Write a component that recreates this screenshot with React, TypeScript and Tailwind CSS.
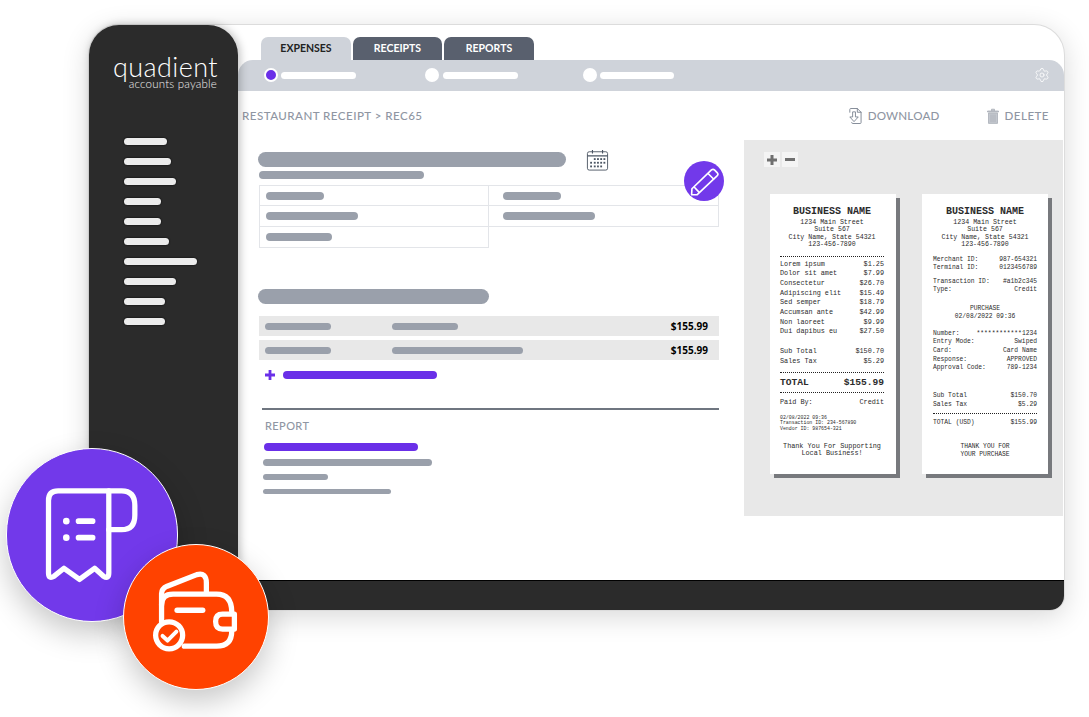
import React from 'react';
import { Settings } from 'lucide-react';

const menuWidths = ['w-[43px]', 'w-[47px]', 'w-[52px]', 'w-[37px]', 'w-[37px]', 'w-[45px]', 'w-[73px]', 'w-[52px]', 'w-[41px]', 'w-[41px]'];

const Bar: React.FC<{ className: string }> = ({ className }) => <div className={`rounded-full ${className}`} />;

const Row: React.FC<{ left: string; right: string; className?: string }> = ({ left, right, className = 'h-[9.7px] leading-[9.7px]' }) => (
  <div className={`flex justify-between whitespace-pre ${className}`}>
    <span>{left}</span>
    <span>{right}</span>
  </div>
);

const Dots: React.FC<{ className?: string }> = ({ className = '' }) => <div className={`border-t border-dotted border-[#222] ${className}`} />;

const ReceiptHead = () => (
  <div className="text-center">
    <div className="text-[10px] leading-[12px] font-bold">BUSINESS NAME</div>
    <div className="mt-[1px] text-[6.6px] leading-[7.4px]">
      <div>1234 Main Street</div>
      <div>Suite 567</div>
      <div>City Name, State 54321</div>
      <div>123-456-7890</div>
    </div>
  </div>
);

const Paper: React.FC<{ className: string; children: React.ReactNode }> = ({ className, children }) => (
  <div className={`relative h-[280px] w-[126px] bg-white pt-[12px] font-['Liberation_Mono',monospace] text-[6.8px] text-[#2b2b2b] shadow-[4px_4px_0_#77797d] ${className}`}>
    {children}
  </div>
);

const ReceiptA = () => (
  <Paper className="pl-[10px] pr-[12px]">
    <ReceiptHead />
    <Dots className="mt-[7px]" />
    <div className="mt-[3px]">
      <Row left="Lorem ipsum" right="$1.25" />
      <Row left="Dolor sit amet" right="$7.99" />
      <Row left="Consectetur" right="$26.70" />
      <Row left="Adipiscing elit" right="$15.49" />
      <Row left="Sed semper" right="$18.79" />
      <Row left="Accumsan ante" right="$42.99" />
      <Row left="Non laoreet" right="$9.99" />
      <Row left="Dui dapibus eu" right="$27.50" />
    </div>
    <div className="mt-[10px]">
      <Row left="Sub Total" right="$150.70" />
      <Row left="Sales Tax" right="$5.29" />
    </div>
    <Dots className="mt-[5px]" />
    <Row left="TOTAL" right="$155.99" className="mt-[3px] h-[14px] text-[9.6px] font-bold leading-[14px]" />
    <Dots className="mt-[2px]" />
    <Row left="Paid By:" right="Credit" className="mt-[4px] h-[10px] leading-[10px]" />
    <div className="mt-[8px] text-[4.9px] leading-[5.6px]">
      <div>02/08/2022 09:36</div>
      <div>Transaction ID: 234-567890</div>
      <div>Vendor ID: 987654-321</div>
    </div>
    <div className="mt-[12px] text-center leading-[7.2px]">
      <div>Thank You For Supporting</div>
      <div>Local Business!</div>
    </div>
  </Paper>
);

const ReceiptB = () => (
  <Paper className="px-[11px]">
    <ReceiptHead />
    <div className="mt-[7px] text-[6.3px] leading-[8px]">
      <Row left="Merchant ID:" right="987-654321" className="" />
      <Row left="Terminal ID:" right="0123456789" className="" />
      <Row left="Transaction ID:" right="#a1b2c345" className="mt-[6px]" />
      <Row left="Type:" right="Credit" className="" />
      <div className="mt-[11px] text-center">
        <div>PURCHASE</div>
        <div>02/08/2022 09:36</div>
      </div>
      <div className="mt-[9px] leading-[8.7px]">
        <Row left="Number:" right="************1234" className="" />
        <Row left="Entry Mode:" right="Swiped" className="" />
        <Row left="Card:" right="Card Name" className="" />
        <Row left="Response:" right="APPROVED" className="" />
        <Row left="Approval Code:" right="789-1234" className="" />
      </div>
      <div className="mt-[18px] leading-[9px]">
        <Row left="Sub Total" right="$150.70" className="" />
        <Row left="Sales Tax" right="$5.29" className="" />
      </div>
      <Dots className="mt-[4px]" />
      <Row left="TOTAL (USD)" right="$155.99" className="mt-[5px]" />
      <div className="mt-[16px] text-center leading-[7.4px]">
        <div>THANK YOU FOR</div>
        <div>YOUR PURCHASE</div>
      </div>
    </div>
  </Paper>
);

const PurpleBadge = () => (
  <div className="absolute left-[6px] top-[448px] z-20 h-[174px] w-[172px] rounded-full border border-white bg-[#7239ea] shadow-[0_12px_30px_rgba(0,0,0,0.22)]">
    <svg viewBox="17 55 516 520" className="h-full w-full" fill="none" stroke="#fff" strokeWidth="16" strokeLinecap="round" strokeLinejoin="round">
      <path d="M326 181H172Q143 181 143 210V430Q143 450 160 440L190 416L237 450L283 416L310 440Q326 450 326 430V181" />
      <path d="M326 181H365Q405 181 405 225V255Q405 299 365 299H326" />
      <path d="M234 273H277M234 323H277" strokeWidth="17" />
      <circle cx="197" cy="273" r="10" fill="#fff" stroke="none" />
      <circle cx="197" cy="323" r="10" fill="#fff" stroke="none" />
    </svg>
  </div>
);

const OrangeBadge = () => (
  <div className="absolute left-[123px] top-[544px] z-20 h-[146px] w-[146px] rounded-full border border-white bg-[#ff4200] shadow-[0_12px_30px_rgba(0,0,0,0.22)]">
    <svg viewBox="370 343 435 437" className="h-full w-full" fill="none" stroke="#fff" strokeWidth="16" strokeLinecap="round" strokeLinejoin="round">
      <path d="M483 578V490Q483 476 500 468L590 433Q619 425 619 458V490" />
      <path d="M483 525Q483 492 518 492H650Q695 492 696 545" />
      <path d="M552 650H650Q696 650 696 604" />
      <path d="M704 553H668Q647 553 647 575Q647 598 668 598H704Z" />
      <path d="M530 541H608" strokeWidth="16" />
      <circle cx="506" cy="617" r="41" fill="#ff4200" />
      <path d="M486 619L501 633L528 606" strokeWidth="12" />
    </svg>
  </div>
);

const App = () => {
  return (
    <div className="relative h-[717px] w-[1089px] overflow-hidden bg-white pl-[89px] pt-[25px] font-['Lato',sans-serif]">
      <div className="flex h-[585px] w-[975px] rounded-[30px] rounded-br-[14px] bg-white shadow-[0_0_0_1px_#dcdcdc,0_6px_28px_rgba(0,0,0,0.16)]">
        {/* sidebar */}
        <aside className="z-10 flex w-[149px] shrink-0 flex-col rounded-t-[30px] rounded-bl-[14px] bg-[#2b2b2b] shadow-[2px_0_8px_rgba(0,0,0,0.25)]">
          <div className="ml-[24px] mt-[29px] w-[104px] text-right text-white">
            <div className="text-[27px] font-light leading-[25px] tracking-[0.4px]">quadient</div>
            <div className="text-[11.5px] font-light leading-[10px] tracking-[0.2px] text-[#f0f0f0]">accounts payable</div>
          </div>
          <div className="ml-[35px] mt-[49px] flex flex-col gap-[13px]">
            {menuWidths.map((w, i) => (
              <Bar key={i} className={`h-[7px] bg-[#ececec] shadow-[0_0_2px_#000] ${w}`} />
            ))}
          </div>
        </aside>

        {/* main */}
        <main className="relative flex min-w-0 flex-1 flex-col">
          <div className="flex gap-[2px] pl-[23px] pt-[12px]">
            <div className="flex h-[23px] w-[90px] items-center justify-center rounded-t-[7px] bg-[#cfd3da] text-[10.5px] font-bold text-[#222]">EXPENSES</div>
            <div className="flex h-[23px] w-[89px] items-center justify-center rounded-t-[7px] bg-[#59606e] text-[10.5px] font-bold text-white">RECEIPTS</div>
            <div className="flex h-[23px] w-[90px] items-center justify-center rounded-t-[7px] bg-[#59606e] text-[10.5px] font-bold text-white">REPORTS</div>
          </div>

          <div className="flex h-[31px] items-center rounded-t-[15px] bg-[#cfd3da] pb-[1px] pl-[26px] pr-[14px]">
            <div className="h-[14px] w-[14px] rounded-full border-2 border-white bg-[#6a2fe8]" />
            <Bar className="ml-[3px] h-[7px] w-[75px] bg-white" />
            <div className="ml-[69px] h-[14px] w-[14px] rounded-full bg-white" />
            <Bar className="ml-[4px] h-[7px] w-[75px] bg-white" />
            <div className="ml-[65px] h-[14px] w-[14px] rounded-full bg-white" />
            <Bar className="ml-[3px] h-[7px] w-[74px] bg-white" />
            <Settings className="mb-[1px] ml-auto h-[16px] w-[16px] text-white" strokeWidth={1.2} />
          </div>

          <div className="flex h-[49px] items-center pl-[4px] pr-[15px] text-[11.6px] font-medium tracking-[0.45px] text-[#8f96a3]">
            <span>RESTAURANT RECEIPT &gt; REC65</span>
            <svg viewBox="0 0 16 18" className="ml-auto h-[18px] w-[15px]" fill="none" stroke="#7f8794" strokeWidth="1" strokeLinecap="round" strokeLinejoin="round">
              <path d="M3 5V2Q3 1 4 1H11L15 5V16Q15 17 14 17H6Q5 17 5 16" />
              <path d="M11 1V5H15" />
              <path d="M6 5V10H3L7.5 15L12 10H9V5Z" />
            </svg>
            <span className="ml-[6px] tracking-[0.2px]">DOWNLOAD</span>
            <svg viewBox="0 0 12 16" className="ml-[47px] h-[16px] w-[12px]" fill="#c3c7ce" stroke="#a9aeb8" strokeWidth="0.8">
              <path d="M0.5 3H11.5V4H0.5ZM4.5 3V1.2H7.5V3" />
              <path d="M1.5 5H10.5V15.4H1.5Z" />
              <path d="M4 6.5V14M6 6.5V14M8 6.5V14" fill="none" />
            </svg>
            <span className="ml-[6px]">DELETE</span>
          </div>

          <div className="flex h-[376px]">
            <div className="relative w-[506px] shrink-0 pl-[20px] pt-[12px]">
              <div className="flex h-[15px] items-start">
                <Bar className="h-[15px] w-[308px] bg-[#9aa0ab]" />
                <svg viewBox="0 0 24 24" className="ml-[20px] mt-[-3px] h-[22px] w-[23px]" fill="none" stroke="#4b5563" strokeWidth="1">
                  <rect x="1" y="3" width="22" height="20" rx="2" />
                  <path d="M1 7.5H23M6.5 1V5M17.5 1V5" strokeWidth="1.2" />
                  <g fill="#4b5563" stroke="none">
                    <rect x="8" y="10" width="2" height="2" />
                    <rect x="11.5" y="10" width="2" height="2" />
                    <rect x="15" y="10" width="2" height="2" />
                    <rect x="18.5" y="10" width="2" height="2" />
                    <rect x="4" y="14" width="2" height="2" />
                    <rect x="8" y="14" width="2" height="2" />
                    <rect x="11.5" y="14" width="2" height="2" />
                    <rect x="15" y="14" width="2" height="2" />
                    <rect x="18.5" y="14" width="2" height="2" />
                    <rect x="4" y="18" width="2" height="2" />
                    <rect x="8" y="18" width="2" height="2" />
                    <rect x="11.5" y="18" width="2" height="2" />
                    <rect x="15" y="18" width="2" height="2" />
                  </g>
                </svg>
              </div>
              <Bar className="ml-[1px] mt-[4px] h-[8px] w-[165px] bg-[#9aa0ab]" />

              <div className="ml-[1px] mt-[6px] grid w-[460px] grid-cols-2">
                <div className="flex h-[21px] items-center border border-[#e3e5e9] pl-[6px]"><Bar className="h-[8px] w-[58px] rounded-[2px] bg-[#9aa0ab]" /></div>
                <div className="flex h-[21px] items-center border border-l-0 border-[#e3e5e9] pl-[14px]"><Bar className="h-[8px] w-[58px] rounded-[2px] bg-[#9aa0ab]" /></div>
                <div className="flex h-[21px] items-center border border-t-0 border-[#e3e5e9] pl-[6px]"><Bar className="h-[8px] w-[92px] rounded-[2px] bg-[#9aa0ab]" /></div>
                <div className="flex h-[21px] items-center border border-l-0 border-t-0 border-[#e3e5e9] pl-[14px]"><Bar className="h-[8px] w-[92px] rounded-[2px] bg-[#9aa0ab]" /></div>
                <div className="flex h-[21px] items-center border border-t-0 border-[#e3e5e9] pl-[6px]"><Bar className="h-[8px] w-[66px] rounded-[2px] bg-[#9aa0ab]" /></div>
              </div>

              <div className="absolute left-[446px] top-[21px] flex h-[40px] w-[40px] items-center justify-center rounded-full bg-[#7239ea]">
                <svg viewBox="1332 63 121 121" className="h-full w-full" fill="none" stroke="#fff" strokeWidth="5" strokeLinejoin="round">
                  <path d="M1356 147L1415 90Q1420 86 1424 90L1433 99Q1437 104 1432 108L1372 165L1355 165Z" />
                  <path d="M1404 100L1423 119M1362 141L1378 158" />
                </svg>
              </div>

              <Bar className="mt-[41px] h-[15px] w-[231px] bg-[#9aa0ab]" />

              <div className="ml-[1px] mt-[12px] flex h-[20px] w-[460px] items-center bg-[#e8e8e8] pl-[6px] pr-[11px]">
                <Bar className="h-[7px] w-[66px] bg-[#9aa0ab]" />
                <Bar className="ml-[61px] h-[7px] w-[66px] bg-[#9aa0ab]" />
                <span className="ml-auto font-['Open_Sans',sans-serif] text-[10px] font-bold text-black">$155.99</span>
              </div>
              <div className="ml-[1px] mt-[4px] flex h-[20px] w-[460px] items-center bg-[#e8e8e8] pl-[6px] pr-[11px]">
                <Bar className="h-[7px] w-[66px] bg-[#9aa0ab]" />
                <Bar className="ml-[61px] h-[7px] w-[131px] bg-[#9aa0ab]" />
                <span className="ml-auto font-['Open_Sans',sans-serif] text-[10px] font-bold text-black">$155.99</span>
              </div>

              <div className="ml-[7px] mt-[10px] flex items-center">
                <svg viewBox="0 0 10 10" className="h-[10px] w-[10px]" fill="#6a2fe8">
                  <path d="M3.6 0H6.4V3.6H10V6.4H6.4V10H3.6V6.4H0V3.6H3.6Z" />
                </svg>
                <Bar className="ml-[8px] h-[8px] w-[154px] bg-[#6a2fe8]" />
              </div>

              <div className="ml-[4px] mt-[28px] h-[2px] w-[457px] bg-[#6f7680]" />
              <div className="ml-[7px] mt-[9px] text-[11px] font-medium leading-[14px] tracking-[0.4px] text-[#8f96a3]">REPORT</div>
              <Bar className="ml-[6px] mt-[10px] h-[8px] w-[154px] bg-[#6a2fe8]" />
              <Bar className="ml-[5px] mt-[8px] h-[7px] w-[169px] bg-[#9aa0ab]" />
              <Bar className="ml-[5px] mt-[8px] h-[6px] w-[65px] bg-[#9aa0ab]" />
              <Bar className="ml-[5px] mt-[9px] h-[5px] w-[128px] bg-[#9aa0ab]" />
            </div>

            <div className="w-[319px] shrink-0 bg-[#e8e8e8] pl-[20px] pt-[12px]">
              <div className="flex gap-[2px]">
                <div className="flex h-[15px] w-[16px] items-center justify-center bg-[#f4f4f4]">
                  <svg viewBox="0 0 10 10" className="h-[10px] w-[10px]" fill="#6f6f6f">
                    <path d="M3.5 0H6.5V3.5H10V6.5H6.5V10H3.5V6.5H0V3.5H3.5Z" />
                  </svg>
                </div>
                <div className="flex h-[15px] w-[16px] items-center justify-center bg-[#f4f4f4]">
                  <div className="h-[3px] w-[10px] bg-[#6f6f6f]" />
                </div>
              </div>
              <div className="ml-[6px] mt-[27px] flex gap-[26px]">
                <ReceiptA />
                <ReceiptB />
              </div>
            </div>
          </div>

          <div className="mt-auto h-[30px] rounded-br-[14px] border-t border-black bg-[#2b2b2b]" />
        </main>
      </div>

      <PurpleBadge />
      <OrangeBadge />
    </div>
  );
};

export default App;
